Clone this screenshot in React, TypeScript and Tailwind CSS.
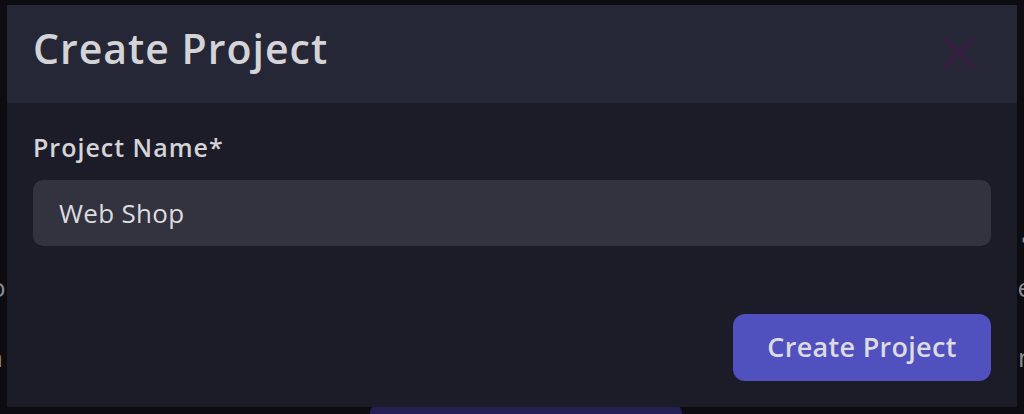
function Backdrop() {
  return (
    <div className="flex h-full w-full flex-col pt-[229px] text-[26px] text-[#8a8a92]">
      <div className="flex h-[20px] items-center justify-end leading-[20px]">
        <span className="-mr-[6px]">•</span>
      </div>
      <div className="mt-[28px] flex h-[20px] justify-between leading-[20px]">
        <span className="-ml-[10px]">o</span>
        <span className="-mr-[8px]">e</span>
      </div>
      <div className="mt-[50px] flex h-[20px] justify-between leading-[20px]">
        <span className="-ml-[13px]">n</span>
        <span className="-mr-[10px]">n</span>
      </div>
      <div className="mt-auto flex pl-[370px]">
        <div className="h-[9px] w-[312px] rounded-t-[8px] bg-[#242053]" />
      </div>
    </div>
  );
}

function CloseIcon() {
  return (
    <svg width="30" height="30" viewBox="0 0 30 30" className="mt-[10px] shrink-0">
      <path
        d="M1.5 1.5 L28.5 28.5 M28.5 1.5 L1.5 28.5"
        stroke="#3b1b44"
        strokeWidth="3.2"
        strokeLinecap="round"
      />
    </svg>
  );
}

export default function App() {
  return (
    <div className="relative h-[414px] w-full overflow-hidden bg-[#0c0c11] font-['Open_Sans',sans-serif]">
      <Backdrop />
      <div className="absolute left-[7px] top-[5px] flex h-[402px] w-[1010px] flex-col bg-[#1b1c27]">
        <div className="flex h-[98px] items-start justify-between bg-[#262736] pl-[26px] pr-[43px] pt-[23px]">
          <h2 className="text-[41px] font-semibold leading-none tracking-[1px] text-[#d4d4d8]">
            Create Project
          </h2>
          <CloseIcon />
        </div>
        <div className="flex flex-1 flex-col px-[26px] pt-[26px]">
          <label className="text-[25px] font-semibold leading-[37px] tracking-[1px] text-[#d4d4d8]">
            Project Name*
          </label>
          <div className="mt-[14px] flex h-[66px] items-center rounded-[10px] bg-[#33323f] px-[26px] text-[26px] tracking-[0.3px] text-[#dcdce0]">
            Web Shop
          </div>
          <div className="mt-[68px] flex justify-end">
            <button className="h-[67px] w-[258px] rounded-[12px] bg-[#5050be] text-[27px] font-semibold tracking-[0.3px] text-[#dcdce0]">
              Create Project
            </button>
          </div>
        </div>
      </div>
    </div>
  );
}
